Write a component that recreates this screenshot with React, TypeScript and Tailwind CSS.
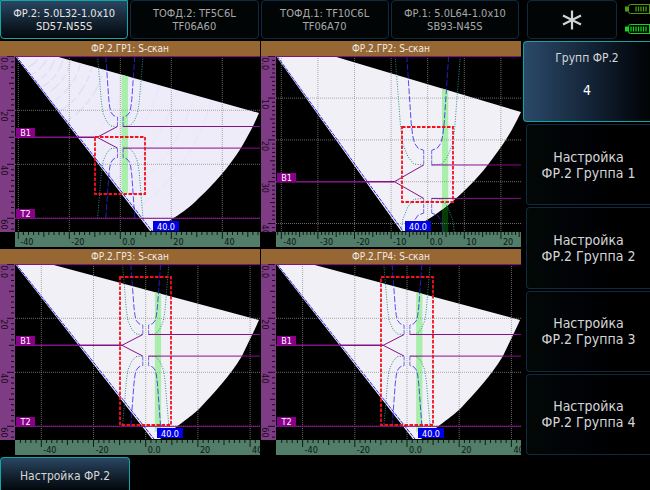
type Point = [number, number];

type Scan = {
  id: string;
  title: string;
  x0: number; // pixel of the 0 mm mark
  sx: number; // pixels per mm
  sy: number;
  major: number;
  xLabels: number[];
  yLabels: number[];
  beam: string;
  beamEnd: Point;
  fill: string;
  gate: Point;
  gateBottom: number;
  frame: { x: number; y: number; w: number; h: number };
  angle: Point;
  noise?: boolean;
};

const FONT = "'DejaVu Sans Condensed', 'DejaVu Sans', sans-serif";

const wideBeam =
  "M15 0H50L259 56C256 63 252 71 242 92C229 113 214 129 200 144C188 155 180 160 160 175H152Z";

const scans: Scan[] = [
  {
    id: "gr1",
    title: "ФР.2.ГР1: S-скан",
    x0: 120.3,
    sx: 2.55,
    sy: 2.7,
    major: 20,
    xLabels: [-40, -20, 0, 20, 40],
    yLabels: [0, 20, 40, 60],
    beam: "M15 0H55L259 57C256 64 252 73 241 92C229 111 214 128 200 141C190 151 182 158 152 175H150Z",
    beamEnd: [152, 175],
    fill: "#efecfa",
    gate: [0.5, 3],
    gateBottom: 50.8,
    frame: { x: 95, y: 81, w: 50, h: 57 },
    angle: [153, 165],
    noise: true,
  },
  {
    id: "gr2",
    title: "ФР.2.ГР2: S-скан",
    x0: 166.7,
    sx: 3.66,
    sy: 4.18,
    major: 10,
    xLabels: [-40, -30, -20, -10, 0, 10, 20],
    yLabels: [0, 10, 20, 30, 40],
    beam: "M15 0H72L260 56C255 66 250 78 232 102C219 120 206 133 192 145C180 155 170 162 148 175H140Z",
    beamEnd: [142, 175],
    fill: "#f2f0f7",
    gate: [3.9, 5.6],
    gateBottom: 42,
    frame: { x: 141, y: 71, w: 51, h: 75 },
    angle: [144, 165],
  },
  {
    id: "gr3",
    title: "ФР.2.ГР3: S-скан",
    x0: 145.7,
    sx: 2.61,
    sy: 2.7,
    major: 20,
    xLabels: [-40, -20, 0, 20, 40],
    yLabels: [0, 20, 40, 60],
    beam: wideBeam,
    beamEnd: [154, 175],
    fill: "#f2f0f7",
    gate: [3.5, 5.9],
    gateBottom: 62,
    frame: { x: 120, y: 13, w: 51, h: 148 },
    angle: [157, 164],
  },
  {
    id: "gr4",
    title: "ФР.2.ГР4: S-скан",
    x0: 146,
    sx: 2.61,
    sy: 2.7,
    major: 20,
    xLabels: [-40, -20, 0, 20, 40],
    yLabels: [0, 20, 40, 60],
    beam: wideBeam,
    beamEnd: [154, 175],
    fill: "#f2f0f7",
    gate: [3.5, 5.9],
    gateBottom: 62,
    frame: { x: 120, y: 13, w: 52, h: 148 },
    angle: [157, 164],
  },
];

// half of the weld profile in mm, mirrored around x = 0 and y = 30
const bevel: Point[] = [[5.7, 0], [5.1, 8], [4.5, 16], [4.1, 19], [3.6, 20.8], [2.6, 22], [1.1, 22.5]];
const root: Point[] = [[1.1, 22.5], [1.1, 26]];
const haz: Point[] = [[8.9, 0], [8.1, 9], [7.4, 17], [6.8, 21], [5.4, 24], [3.8, 25.8], [1.1, 26]];
const mirrors: Point[] = [[1, 1], [-1, 1], [1, -1], [-1, -1]];

function Weld({ scan }: { scan: Scan }) {
  const line = (pts: Point[], mx: number, my: number) =>
    pts
      .map(([x, y]) => {
        const depth = my > 0 ? y : 60 - y;
        return `${(scan.x0 + mx * x * scan.sx).toFixed(1)},${(0.3 + depth * scan.sy).toFixed(1)}`;
      })
      .join(" ");

  return (
    <g fill="none">
      {mirrors.map(([mx, my]) => (
        <g key={`${mx}${my}`}>
          <polyline points={line(haz, mx, my)} stroke="#259088" strokeDasharray="1 1.5" />
          <polyline points={line(bevel, mx, my)} stroke="#2c26ee" strokeOpacity={0.8} strokeDasharray="6 2" />
          <polyline points={line(root, mx, my)} stroke="#3a34e6" strokeOpacity={0.7} strokeDasharray="4 1" />
        </g>
      ))}
    </g>
  );
}

function Tag({ x, y, w, h, text, fill }: { x: number; y: number; w: number; h: number; text: string; fill: string }) {
  return (
    <g>
      <rect x={x} y={y} width={w} height={h} fill={fill} />
      <text x={x + w / 2} y={y + h - 1} textAnchor="middle" fontSize="9" fill="#fff">
        {text}
      </text>
    </g>
  );
}

function ScanView({ scan }: { scan: Scan }) {
  const { id, x0, sx, sy, major, frame } = scan;
  const px = (mm: number) => x0 + mm * sx;
  const py = (mm: number) => 0.3 + mm * sy;
  const step = major / 10;

  const xTicks: number[] = [];
  for (let i = -60; i <= 60; i++) if (px(i * step) > 16 && px(i * step) < 259) xTicks.push(i);
  const yTicks: number[] = [];
  for (let i = 0; i <= 60; i++) if (py(i * step) < 176) yTicks.push(i);
  const tick = (i: number, long: number) => (i % 10 === 0 ? long : i % 5 === 0 ? long - 2 : long - 4);
  const label = (n: number) => (n === 0 ? "0.0" : String(n));
  const gateX = px(scan.gate[0]);
  const gateW = px(scan.gate[1]) - gateX;

  return (
    <svg viewBox="0 0 260 191" className="block h-auto w-full" fontFamily={FONT} role="img" aria-label={scan.title}>
      <defs>
        <clipPath id={`${id}-plot`}>
          <rect x="15" y="0" width="245" height="176" />
        </clipPath>
        <clipPath id={`${id}-beam`}>
          <path d={scan.beam} />
        </clipPath>
        <clipPath id={`${id}-depth`}>
          <rect x="0" y="0" width="15" height="176" />
        </clipPath>
      </defs>

      <g clipPath={`url(#${id}-plot)`}>
        {id === "gr2" && <rect x={gateX} y="140" width={gateW} height="36" fill="#063d06" />}
        <path d={scan.beam} fill={scan.fill} />
        {scan.noise && (
          <g clipPath={`url(#${id}-beam)`} fill="none" stroke="#e2def4" strokeWidth="1.5" strokeDasharray="7 3 12 4">
            {[18, 26, 34, 42, 50, 60, 72, 84].map((r) => (
              <circle key={r} cx="22" cy="-6" r={r} />
            ))}
            {[110, 126, 142, 160, 178, 196].map((r) => (
              <circle key={r} cx="22" cy="-6" r={r} strokeOpacity={0.35} />
            ))}
          </g>
        )}
        <g clipPath={`url(#${id}-beam)`}>
          <rect x={gateX} y="0" width={gateW} height={py(scan.gateBottom)} fill="#a9eeaa" />
        </g>

        <g stroke="#8c8c8c" strokeOpacity={0.75} strokeDasharray="1 1">
          {scan.xLabels.map((n) => (
            <line key={n} x1={px(n)} x2={px(n)} y1="0" y2="176" />
          ))}
          {scan.yLabels.slice(1).map((n) => (
            <line key={n} x1="15" x2="260" y1={py(n)} y2={py(n)} />
          ))}
        </g>

        <Weld scan={scan} />
        <path d={`M16 0L${scan.beamEnd[0]} ${scan.beamEnd[1]}`} stroke="#2a2af0" strokeWidth="1" strokeDasharray="4 1" />

        <g stroke="#85108a" fill="none">
          <path d="M15 .5H260" />
          <path d={`M15 ${py(30)}H${px(-9.1)}`} strokeWidth="1.4" />
          <path d={`M${px(-1.1)} ${py(26)}L${px(-9.1)} ${py(30)}L${px(-1.1)} ${py(34)}`} />
          <path d={`M${px(1)} ${py(26)}H260M${px(1)} ${py(34)}H260`} />
          <path d={`M15 ${py(60)}H260`} />
        </g>

        <Tag x={16} y={Math.round(py(30)) - 9} w={19} h={9} text="B1" fill="#8b008b" />
        {py(60) < 176 && <Tag x={16} y={Math.round(py(60)) - 9} w={19} h={9} text="T2" fill="#8b008b" />}
        <rect
          x={frame.x}
          y={frame.y}
          width={frame.w}
          height={frame.h}
          fill="none"
          stroke="#f5101c"
          strokeWidth="1.8"
          strokeDasharray="3.5 1.5"
        />
        <Tag x={scan.angle[0]} y={scan.angle[1]} w={26} h={10} text="40.0" fill="#0000e8" />
      </g>

      <g clipPath={`url(#${id}-depth)`}>
        <rect width="15" height="176" fill="#7e3c84" />
        {yTicks.map((i) => (
          <line key={i} x1={14 - tick(i, 7)} x2="14" y1={py(i * step)} y2={py(i * step)} stroke="#1d0620" />
        ))}
        {scan.yLabels.map((n) => (
          <text key={n} transform={`translate(1 ${py(n) + 1}) rotate(90)`} fontSize="9" fill="#1a0a1c">
            {label(n)}
          </text>
        ))}
      </g>

      <rect x="15" y="176" width="245" height="15" fill="#527d69" />
      {xTicks.map((i) => (
        <line key={i} x1={px(i * step)} x2={px(i * step)} y1="176" y2={177 + tick(i, 6)} stroke="#0c1a14" />
      ))}
      {scan.xLabels.map((n) => (
        <text key={n} x={px(n) + 2} y="189" fontSize="9" fill="#0b1812">
          {label(n)}
        </text>
      ))}
    </svg>
  );
}

function Battery({ color, bars }: { color: string; bars: number[] }) {
  return (
    <svg viewBox="0 0 25 12" className="block h-3 w-[25px]" fill="none" stroke={color} aria-hidden="true">
      <path d="M25 1.5H5.5Q3.5 1.5 3.5 3.5V8.5Q3.5 10.5 5.5 10.5H25M24.5 1V11" />
      <rect x="0.5" y="4" width="2" height="4" fill={color} />
      {bars.map((x) => (
        <path key={x} d={`M${x} 3.5V8.5`} strokeWidth="1.3" />
      ))}
    </svg>
  );
}

const probes = [
  ["ФР.2: 5.0L32-1.0x10", "SD57-N55S"],
  ["ТОФД.2: TF5C6L", "TF06A60"],
  ["ТОФД.1: TF10C6L", "TF06A70"],
  ["ФР.1: 5.0L64-1.0x10", "SB93-N45S"],
];

export default function App() {
  return (
    <div className="min-h-screen overflow-hidden bg-black font-['DejaVu_Sans_Condensed','DejaVu_Sans',sans-serif] text-[#d6d6d6]">
      <header className="flex gap-2">
        <nav className="grid flex-1 grid-cols-4 gap-0.5">
          {probes.map(([name, wedge], i) => (
            <button
              key={name}
              className={
                i === 0
                  ? "h-[39px] rounded-b-sm border border-[#12a5a5] bg-linear-to-b from-[#2a4763] to-[#04080d] text-[11px] leading-[13px] whitespace-nowrap text-[#e6e6e6]"
                  : "h-[39px] rounded-sm border border-[#0d2a40] bg-[#020506] text-[11px] leading-[13px] whitespace-nowrap text-[#a8a8a8]"
              }
            >
              {name}
              <br />
              {wedge}
            </button>
          ))}
        </nav>
        <div className="flex w-[123px] gap-2">
          <button
            aria-label="Заморозка"
            className="flex h-[39px] flex-1 items-center justify-center rounded-sm border border-[#0d2a40] bg-[#020506]"
          >
            <svg viewBox="0 0 20 20" className="size-5" stroke="#d4d4d4" strokeWidth="2.2" aria-hidden="true">
              <path d="M10 .5V19.5M1 5.5L19 14.5M19 5.5L1 14.5" />
            </svg>
          </button>
          <div className="flex flex-col gap-2 pt-[3px]">
            <Battery color="#4f9a12" bars={[11, 13.5, 16, 18.5, 21]} />
            <Battery color="#10d818" bars={[6, 8.5, 11, 13.5, 16, 18.5, 21]} />
          </div>
        </div>
      </header>

      <div className="mt-0.5 flex gap-0.5">
        <main className="grid flex-1 grid-cols-2 gap-x-px gap-y-0.5">
          {scans.map((scan) => (
            <section key={scan.id}>
              <h2 className="h-[15px] bg-[#966633] text-center text-[10px] leading-[15px] text-[#f0ece6]">{scan.title}</h2>
              <ScanView scan={scan} />
            </section>
          ))}
        </main>

        <aside className="grid w-[127px] auto-rows-fr gap-0.5 text-sm leading-4">
          <button className="flex flex-col items-center gap-4 rounded-l-sm border border-r-0 border-[#12a5a5] bg-linear-to-r from-[#2a4a69] via-[#15263a] to-[#020406] pt-2 text-xs leading-4">
            <span>Групп ФР.2</span>
            <span className="text-sm leading-4 font-medium text-white">4</span>
          </button>
          {[1, 2, 3, 4].map((n) => (
            <button key={n} className="ml-[3px] rounded-l-sm border border-r-0 border-[#0d2a40] bg-linear-to-r from-[#020806] via-[#010206] to-black">
              Настройка
              <br />
              ФР.2 Группа {n}
            </button>
          ))}
        </aside>
      </div>

      <footer className="mt-0.5">
        <button className="h-[33px] w-[130px] rounded-t-sm border border-b-0 border-[#12a5a5] bg-linear-to-b from-[#2a4763] to-[#04080d] pt-1 text-xs leading-4">
          Настройка ФР.2
        </button>
      </footer>
    </div>
  );
}
